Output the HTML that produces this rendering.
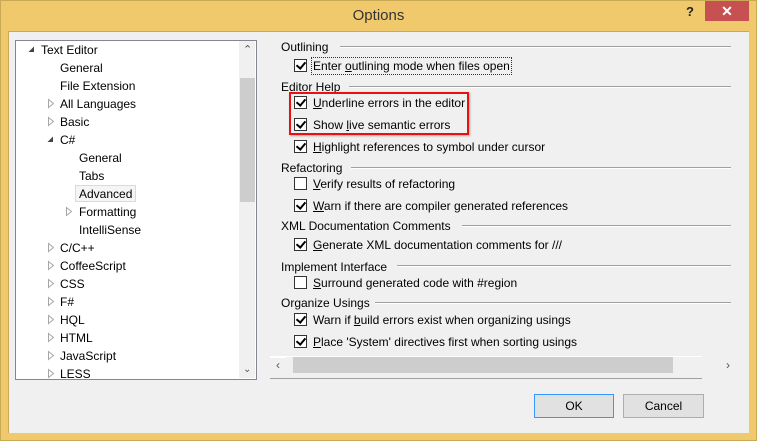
<!DOCTYPE html>
<html><head><meta charset="utf-8"><style>
*{margin:0;padding:0;box-sizing:border-box}
body{width:757px;height:441px;background:#f0c96c;position:relative;overflow:hidden;font-family:"Liberation Sans",sans-serif;font-size:12px;color:#000}
.frame{position:absolute;left:0;top:0;width:757px;height:441px;border:1px solid #c9a954}
.title{position:absolute;left:0;top:7px;width:757px;text-align:center;font-size:15px;color:#333}
.close{position:absolute;left:705px;top:1px;width:44px;height:20px;background:#c75050;color:#fff;text-align:center;font-size:14px;font-weight:bold;line-height:20px}
.help{position:absolute;left:686px;top:4px;font-weight:bold;font-size:13px;color:#222}
.client{position:absolute;left:8px;top:31px;width:741px;height:402px;background:#f0f0f0;border-top:1px solid #c9a954;border-left:1px solid #c9a954}
.t{position:absolute;white-space:nowrap;line-height:16px}
.tree{position:absolute;left:15px;top:40px;width:242px;height:340px;background:#fff;border:1px solid #828790;overflow:hidden}
.vs{position:absolute;left:239px;top:41px;width:16px;height:337px;background:#f0f0f0}
.thumb{position:absolute;left:240px;top:78px;width:15px;height:124px;background:#cdcdcd}
svg.ex,svg.col{position:absolute;overflow:visible}
.cb{position:absolute;width:13px;height:13px;border:1px solid #333;background:#fff}
.cb.c::after{content:"";position:absolute;left:3px;top:0px;width:4px;height:7px;border-right:2px solid #000;border-bottom:2px solid #000;transform:rotate(40deg)}
.hl{position:absolute;height:1px;background:#a0a0a0;border-bottom:1px solid #fff;box-sizing:content-box}
.btn{position:absolute;height:24px;width:80px;background:#e1e1e1;border:1px solid #adadad;text-align:center;line-height:22px}
u{text-decoration:underline}
</style></head><body>
<div class="frame"></div>
<div class="title">Options</div>
<div class="help">?</div>
<div class="close">✕</div>
<div class="client"></div>

<div class="tree"></div>
<div class="vs"></div>
<div class="thumb"></div>
<div class="t" style="left:243px;top:42px;color:#555;font-size:11px">⌃</div>
<div class="t" style="left:243px;top:362px;color:#555;font-size:10px">⌄</div>

<svg class="col" style="left:28px;top:46px" width="7" height="7"><path d="M6 0.5 L6 6 L0.5 6 Z" fill="#444"/></svg>
<div class="t" style="left:41px;top:42px">Text Editor</div>
<div class="t" style="left:60px;top:60px">General</div>
<div class="t" style="left:60px;top:78px">File Extension</div>
<svg class="ex" style="left:48px;top:99px" width="7" height="10"><path d="M0.5 0.5 L5.5 4.5 L0.5 8.5 Z" fill="#fff" stroke="#a6a6a6"/></svg>
<div class="t" style="left:60px;top:96px">All Languages</div>
<svg class="ex" style="left:48px;top:117px" width="7" height="10"><path d="M0.5 0.5 L5.5 4.5 L0.5 8.5 Z" fill="#fff" stroke="#a6a6a6"/></svg>
<div class="t" style="left:60px;top:114px">Basic</div>
<svg class="col" style="left:47px;top:136px" width="7" height="7"><path d="M6 0.5 L6 6 L0.5 6 Z" fill="#444"/></svg>
<div class="t" style="left:60px;top:132px">C#</div>
<div class="t" style="left:79px;top:150px">General</div>
<div class="t" style="left:79px;top:168px">Tabs</div>
<div style="position:absolute;left:75px;top:185px;width:61px;height:17px;background:#f5f5f5;border:1px solid #dadada"></div>
<div class="t" style="left:79px;top:186px">Advanced</div>
<svg class="ex" style="left:66px;top:207px" width="7" height="10"><path d="M0.5 0.5 L5.5 4.5 L0.5 8.5 Z" fill="#fff" stroke="#a6a6a6"/></svg>
<div class="t" style="left:79px;top:204px">Formatting</div>
<div class="t" style="left:79px;top:222px">IntelliSense</div>
<svg class="ex" style="left:48px;top:243px" width="7" height="10"><path d="M0.5 0.5 L5.5 4.5 L0.5 8.5 Z" fill="#fff" stroke="#a6a6a6"/></svg>
<div class="t" style="left:60px;top:240px">C/C++</div>
<svg class="ex" style="left:48px;top:261px" width="7" height="10"><path d="M0.5 0.5 L5.5 4.5 L0.5 8.5 Z" fill="#fff" stroke="#a6a6a6"/></svg>
<div class="t" style="left:60px;top:258px">CoffeeScript</div>
<svg class="ex" style="left:48px;top:279px" width="7" height="10"><path d="M0.5 0.5 L5.5 4.5 L0.5 8.5 Z" fill="#fff" stroke="#a6a6a6"/></svg>
<div class="t" style="left:60px;top:276px">CSS</div>
<svg class="ex" style="left:48px;top:297px" width="7" height="10"><path d="M0.5 0.5 L5.5 4.5 L0.5 8.5 Z" fill="#fff" stroke="#a6a6a6"/></svg>
<div class="t" style="left:60px;top:294px">F#</div>
<svg class="ex" style="left:48px;top:315px" width="7" height="10"><path d="M0.5 0.5 L5.5 4.5 L0.5 8.5 Z" fill="#fff" stroke="#a6a6a6"/></svg>
<div class="t" style="left:60px;top:312px">HQL</div>
<svg class="ex" style="left:48px;top:333px" width="7" height="10"><path d="M0.5 0.5 L5.5 4.5 L0.5 8.5 Z" fill="#fff" stroke="#a6a6a6"/></svg>
<div class="t" style="left:60px;top:330px">HTML</div>
<svg class="ex" style="left:48px;top:351px" width="7" height="10"><path d="M0.5 0.5 L5.5 4.5 L0.5 8.5 Z" fill="#fff" stroke="#a6a6a6"/></svg>
<div class="t" style="left:60px;top:348px">JavaScript</div>
<svg class="ex" style="left:48px;top:369px" width="7" height="10"><path d="M0.5 0.5 L5.5 4.5 L0.5 8.5 Z" fill="#fff" stroke="#a6a6a6"/></svg>
<div class="t" style="left:60px;top:366px">LESS</div>

<!-- right -->
<div class="t" style="left:281px;top:39px">Outlining</div><div class="hl" style="left:340px;top:46px;width:391px"></div>
<div class="cb c" style="left:294px;top:59px"></div>
<div class="t" style="left:312px;top:58px;outline:1px dotted #333;padding:0 1px">Enter <u>o</u>utlining mode when files open</div>
<div class="t" style="left:281px;top:79px">Editor Help</div><div class="hl" style="left:349px;top:86px;width:382px"></div>
<div class="cb c" style="left:294px;top:96px"></div>
<div class="t" style="left:313px;top:95px"><u>U</u>nderline errors in the editor</div>
<div class="cb c" style="left:294px;top:118px"></div>
<div class="t" style="left:313px;top:117px">Show <u>l</u>ive semantic errors</div>
<div style="position:absolute;left:289px;top:92px;width:180px;height:43px;border:2px solid #e81010;box-shadow:1px 1px 2px rgba(0,0,0,.3)"></div>
<div class="cb c" style="left:294px;top:140px"></div>
<div class="t" style="left:313px;top:139px"><u>H</u>ighlight references to symbol under cursor</div>
<div class="t" style="left:281px;top:160px">Refactoring</div><div class="hl" style="left:351px;top:167px;width:380px"></div>
<div class="cb" style="left:294px;top:177px"></div>
<div class="t" style="left:313px;top:176px"><u>V</u>erify results of refactoring</div>
<div class="cb c" style="left:294px;top:199px"></div>
<div class="t" style="left:313px;top:198px"><u>W</u>arn if there are compiler generated references</div>
<div class="t" style="left:281px;top:218px">XML Documentation Comments</div><div class="hl" style="left:462px;top:225px;width:269px"></div>
<div class="cb c" style="left:294px;top:238px"></div>
<div class="t" style="left:313px;top:237px"><u>G</u>enerate XML documentation comments for ///</div>
<div class="t" style="left:281px;top:259px">Implement Interface</div><div class="hl" style="left:397px;top:265px;width:334px"></div>
<div class="cb" style="left:294px;top:276px"></div>
<div class="t" style="left:313px;top:275px"><u>S</u>urround generated code with #region</div>
<div class="t" style="left:281px;top:295px">Organize Usings</div><div class="hl" style="left:375px;top:302px;width:356px"></div>
<div class="cb c" style="left:294px;top:313px"></div>
<div class="t" style="left:313px;top:312px">Warn if <u>b</u>uild errors exist when organizing usings</div>
<div class="cb c" style="left:294px;top:335px"></div>
<div class="t" style="left:313px;top:334px"><u>P</u>lace 'System' directives first when sorting usings</div>
<div class="hl" style="left:270px;top:356px;width:432px;background:#fff"></div>
<div style="position:absolute;left:286px;top:357px;width:450px;height:16px;background:#f0f0f0"></div>
<div style="position:absolute;left:293px;top:357px;width:380px;height:16px;background:#cdcdcd"></div>
<div class="t" style="left:276px;top:357px;color:#555">‹</div>
<div class="t" style="left:726px;top:357px;color:#555">›</div>
<div style="position:absolute;left:270px;top:378px;width:432px;height:1px;background:#a0a0a0"></div>

<div class="btn" style="left:534px;top:394px;border-color:#3399ff">OK</div>
<div class="btn" style="left:623px;top:394px;width:81px">Cancel</div>
</body></html>
